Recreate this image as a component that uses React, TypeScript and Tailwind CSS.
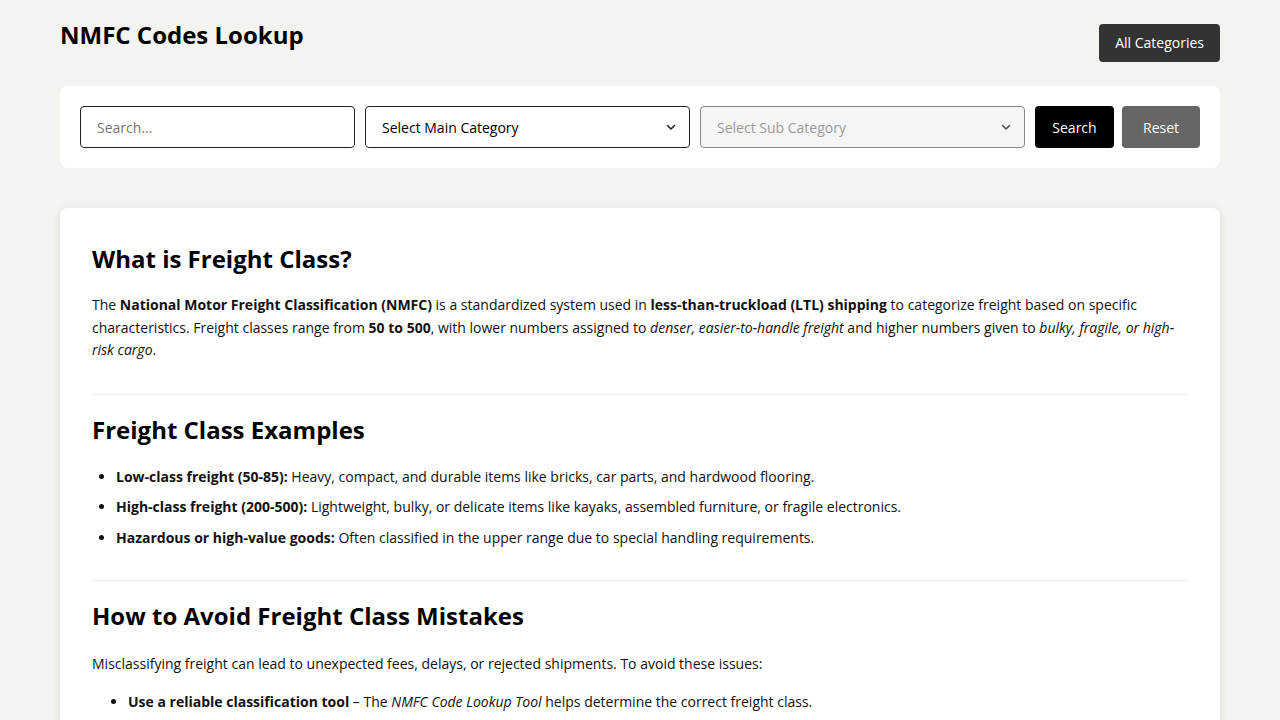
import React from "react";

function Chevron({ color }: { color: string }) {
  return (
    <svg width="12" height="12" viewBox="0 0 12 12" fill="none" className="absolute right-[12px] top-1/2 -translate-y-1/2">
      <path d="M2.5 4.5 L6 8 L9.5 4.5" stroke={color} strokeWidth="1.6" strokeLinecap="round" strokeLinejoin="round" />
    </svg>
  );
}

export default function App() {
  return (
    <div className="min-h-screen bg-[#f3f3ef] text-black" style={{ fontFamily: '"Open Sans", sans-serif' }}>
      <div className="mx-[60px] pt-[18px]">
        <div className="flex items-start justify-between">
          <h1 className="text-[24px] font-bold leading-[34px] mt-0">NMFC Codes Lookup</h1>
          <button className="mt-[6px] h-[38px] px-[16px] rounded-[4px] bg-[#333333] text-white text-[14px] leading-[36px]">All Categories</button>
        </div>

        <div className="mt-[24px] bg-white rounded-[8px] p-[20px] flex items-center">
          <input
            className="w-[275px] h-[42px] border border-[#222] rounded-[4px] px-[16px] text-[14px] placeholder:text-[#757575] outline-none"
            placeholder="Search..."
          />
          <div className="relative ml-[10px] w-[325px] h-[42px] border border-[#222] rounded-[4px] flex items-center px-[16px] text-[14px] text-black">
            Select Main Category
            <Chevron color="#222" />
          </div>
          <div className="relative ml-[10px] w-[325px] h-[42px] border border-[#888] bg-[#f5f5f5] rounded-[4px] flex items-center px-[16px] text-[14px] text-[#9a9a9a]">
            Select Sub Category
            <Chevron color="#555" />
          </div>
          <button className="ml-[10px] w-[79px] h-[42px] bg-black text-white rounded-[4px] text-[14px]">Search</button>
          <button className="ml-[8px] w-[78px] h-[42px] bg-[#666666] text-white rounded-[4px] text-[14px]">Reset</button>
        </div>

        <div className="mt-[40px] bg-white rounded-[8px] shadow-[0_2px_10px_rgba(0,0,0,0.1)] px-[32px] pt-[32px] pb-[40px]">
          <h2 className="text-[24px] font-bold leading-[38px]">What is Freight Class?</h2>
          <p className="mt-[16px] text-[14px] leading-[22.5px] text-[#111]">
            The <b>National Motor Freight Classification (NMFC)</b> is a standardized system used in <b>less-than-truckload (LTL) shipping</b> to categorize freight based on specific characteristics. Freight classes range from <b>50 to 500</b>, with lower numbers assigned to <i>denser, easier-to-handle freight</i> and higher numbers given to <i>bulky, fragile, or high-risk cargo</i>.
          </p>
          <hr className="mt-[32px] border-0 border-t border-[#eeeeee]" />
          <h2 className="mt-[16px] text-[24px] font-bold leading-[38px]">Freight Class Examples</h2>
          <ul className="mt-[18px] list-disc pl-[24px] text-[14px] leading-[20px] text-[#111] flex flex-col gap-[10.5px]">
            <li><b>Low-class freight (50-85):</b> Heavy, compact, and durable items like bricks, car parts, and hardwood flooring.</li>
            <li><b>High-class freight (200-500):</b> Lightweight, bulky, or delicate items like kayaks, assembled furniture, or fragile electronics.</li>
            <li><b>Hazardous or high-value goods:</b> Often classified in the upper range due to special handling requirements.</li>
          </ul>
          <hr className="mt-[32px] border-0 border-t border-[#eeeeee]" />
          <h2 className="mt-[16px] text-[24px] font-bold leading-[38px]">How to Avoid Freight Class Mistakes</h2>
          <p className="mt-[19px] text-[14px] leading-[20px] text-[#111]">
            Misclassifying freight can lead to unexpected fees, delays, or rejected shipments. To avoid these issues:
          </p>
          <ul className="mt-[18px] list-disc pl-[36px] text-[14px] leading-[20px] text-[#111]">
            <li><b>Use a reliable classification tool</b> – The <i>NMFC Code Lookup Tool</i> helps determine the correct freight class.</li>
            <li className="mt-[16px]"><b>Measure and weigh accurately</b> – Density calculations depend on precise dimensions and weight.</li>
          </ul>
        </div>
      </div>
    </div>
  );
}
